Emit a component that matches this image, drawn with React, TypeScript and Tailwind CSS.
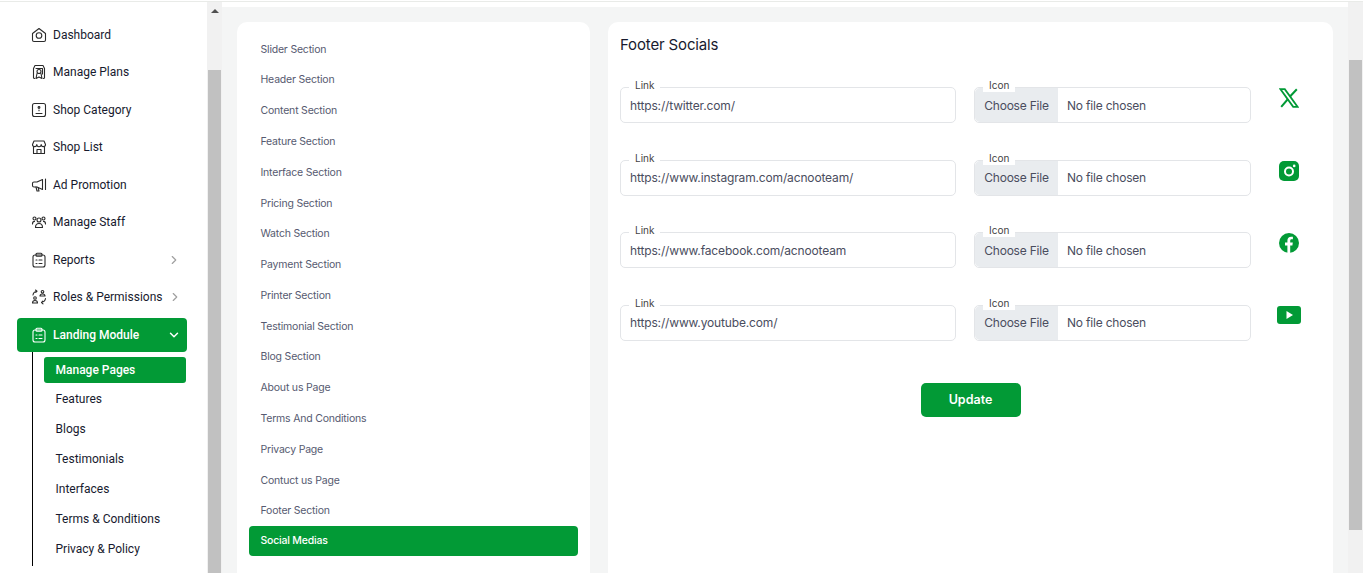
import React from "react";
import { ChevronRight, ChevronDown } from "lucide-react";

const G = "#029a36";

const I = ({ children }: { children: React.ReactNode }) => (
  <svg width="16" height="16" viewBox="0 0 16 16" fill="none" stroke="#2b2b2b" strokeWidth="1.100" strokeLinecap="round" strokeLinejoin="round" className="shrink-0">
    {children}
  </svg>
);

const icons: Record<string, React.ReactNode> = {
  home: (<I><path d="M1.500 13V6.500L8 1.500l6.500 5V13a1.500 1.500 0 0 1-1.500 1.500H3A1.500 1.500 0 0 1 1.500 13Z" /><circle cx="8" cy="8.500" r="2.800" /></I>),
  plans: (<I><path d="M3.500 14.500 2.500 14V4.500L4 1.500h8l1.500 3V14l-1 .5" /><path d="M5 4.500h6.500v5.500" /><circle cx="8" cy="7.500" r="2" /><path d="m6 9.500-1 5 3-1.500 3 1.500-1-5" /></I>),
  category: (<I><rect x="1.500" y="1.500" width="13" height="13" rx="2" /><circle cx="8" cy="5.500" r=".9" /><path d="M8 8v.8M5 11.500h6" /></I>),
  shop: (<I><path d="M1.500 5.500 3 2h10l1.500 3.500a2 2 0 0 1-4.300 0 2.200 2.200 0 0 1-4.400 0 2 2 0 0 1-4.300 0Z" /><path d="M2.500 8v6.500h11V8" /><path d="M6 14.500V10.500h4v4" /></I>),
  ad: (<I><path d="M11.500 2.500v10L6 10H3a1.500 1.500 0 0 1-1.500-1.500v-2A1.500 1.500 0 0 1 3 5h3Z" /><path d="M14.500 2v10.500" /><path d="m5 10 1 4h2l-.7-3.200" /></I>),
  staff: (<I><circle cx="8" cy="6" r="2" /><circle cx="3.500" cy="4.500" r="1.500" /><circle cx="12.500" cy="4.500" r="1.500" /><path d="M4.500 13.500c0-2.400 1.400-4 3.500-4s3.500 1.600 3.500 4ZM1.500 10c0-1.500.8-2.600 2-2.600M14.500 10c0-1.500-.8-2.600-2-2.600" /></I>),
  report: (<I><rect x="2" y="3" width="12" height="12" rx="2" /><rect x="5" y="1.200" width="6" height="3" rx="1" /><path d="M5 8h1M8 8h3M5 11.500h1M8 11.500h3" /></I>),
  roles: (<I><circle cx="11.500" cy="2.800" r="1.300" /><path d="M9 7c0-1.200 1-2 2.500-2S14 5.800 14 7Z" /><path d="M2 6c.3-2 1.500-3.500 4-3.800M4.500 1 6 2.200 4.800 3.500" /><circle cx="4" cy="9" r="1.300" /><path d="M1.500 14c0-1.500 1-2.500 2.500-2.500S6.500 12.500 6.500 14Z" /><path d="M14.500 9.500c-.3 2-1.500 3.500-4 3.800M12 14.800l-1.500-1.300 1.200-1.300" /></I>),
};

const ReportWhite = () => (
  <svg width="16" height="16" viewBox="0 0 16 16" fill="none" stroke="#fff" strokeWidth="1.100" strokeLinecap="round" strokeLinejoin="round" className="shrink-0">
    <rect x="2" y="3" width="12" height="12" rx="2" />
    <rect x="5" y="1.200" width="6" height="3" rx="1" />
    <path d="M5 8h1M8 8h3M5 11.500h1M8 11.500h3" />
  </svg>
);

const menu: [string, string, boolean?][] = [
  ["Dashboard", "home"],
  ["Manage Plans", "plans"],
  ["Shop Category", "category"],
  ["Shop List", "shop"],
  ["Ad Promotion", "ad"],
  ["Manage Staff", "staff"],
  ["Reports", "report", true],
  ["Roles & Permissions", "roles", true],
];

const subs = ["Features", "Blogs", "Testimonials", "Interfaces", "Terms & Conditions", "Privacy & Policy"];

const sections = [
  "Slider Section", "Header Section", "Content Section", "Feature Section", "Interface Section", "Pricing Section",
  "Watch Section", "Payment Section", "Printer Section", "Testimonial Section", "Blog Section", "About us Page",
  "Terms And Conditions", "Privacy Page", "Contuct us Page", "Footer Section",
];

const XIcon = () => (
  <svg width="20" height="20" viewBox="0 0 20 20" fill="none" stroke={G} strokeWidth="1.800">
    <path d="M1.500 1.200h4.300l12.700 17.600h-4.300Z" />
    <path d="M17.800 1.200 10.800 8.800M9 11 2.200 18.800" strokeWidth="2" />
  </svg>
);
const InstaIcon = () => (
  <svg width="20" height="20" viewBox="0 0 20 20">
    <rect width="20" height="20" rx="5" fill={G} />
    <circle cx="10" cy="10.500" r="4" fill="none" stroke="#fff" strokeWidth="2" />
    <circle cx="15.200" cy="4.900" r="1.300" fill="#fff" />
  </svg>
);
const FbIcon = () => (
  <svg width="20" height="20" viewBox="0 0 20 20">
    <circle cx="10" cy="10" r="10" fill={G} />
    <path d="M8.400 20v-7.500H6V9.600h2.400V7.500c0-2.500 1.500-3.800 3.700-3.800.9 0 1.800.1 1.800.1v2.400h-1.200c-1.200 0-1.500.7-1.500 1.500v1.900h2.600l-.4 2.900h-2.200V20Z" fill="#fff" />
  </svg>
);
const YtIcon = () => (
  <svg width="24" height="18" viewBox="0 0 24 18" className="-mt-[2px]">
    <rect width="24" height="18" rx="3" fill={G} />
    <path d="M9.500 5v8l6.500-4Z" fill="#fff" />
  </svg>
);

const socials: [string, React.ReactNode][] = [
  ["https://twitter.com/", <XIcon />],
  ["https://www.instagram.com/acnooteam/", <InstaIcon />],
  ["https://www.facebook.com/acnooteam", <FbIcon />],
  ["https://www.youtube.com/", <YtIcon />],
];

const Scrollbar = ({ top, bottom, arrow }: { top: number; bottom: number; arrow?: boolean }) => (
  <div className="w-[15px] shrink-0 bg-[#f1f1f1] flex flex-col items-center">
    <div className="w-full flex justify-center" style={{ height: top }}>
      {arrow && <div className="mt-[7px] w-0 h-0 border-l-[4px] border-r-[4px] border-b-[4px] border-l-transparent border-r-transparent border-b-[#505050]" />}
    </div>
    <div className="w-[13px] bg-[#c1c1c1]" style={{ height: 573 - top - bottom }} />
  </div>
);

export default function App() {
  return (
    <div className="w-[1363px] h-[573px] overflow-hidden bg-white flex flex-col font-['Inter',sans-serif]">
      <div className="h-[2px] shrink-0 flex flex-col"><div className="h-px" /><div className="h-px bg-[#e9ebe8]" /></div>
      <div className="flex flex-1 min-h-0">
        <aside className="w-[207px] shrink-0 font-['Roboto',sans-serif] pt-[14px] pl-[17px] overflow-hidden">
          {menu.map(([label, icon, arrow]) => (
            <div key={label} className="h-[37.500px] flex items-center pl-[14px] pr-[6px] w-[170px] text-[12px] text-[#171a2e] gap-[6px]">
              {icons[icon]}
              <span className="flex-1 whitespace-nowrap">{label}</span>
              {arrow && <ChevronRight size={14} strokeWidth={2} className="text-[#a0a0a0] shrink-0" />}
            </div>
          ))}
          <div className="mt-[2px] h-[34px] w-[170px] rounded-[4px] bg-[#029a36] flex items-center pl-[14px] pr-[6px] gap-[6px] text-white text-[12px] font-medium">
            <ReportWhite />
            <span className="flex-1">Landing Module</span>
            <ChevronDown size={14} strokeWidth={2.500} />
          </div>
          <div className="ml-[15px] w-[155px] border-l border-black pt-[5px] pb-[2px]">
            <div className="ml-[11px] h-[26px] w-[142px] rounded-[3px] bg-[#029a36] text-white text-[12px] font-medium flex items-center pl-[11.500px] pb-[1px] mb-[1px]">Manage Pages</div>
            {subs.map((s) => (
              <div key={s} className="ml-[11px] h-[30px] flex items-center pl-[11.500px] text-[12px] text-[#171a2e]">{s}</div>
            ))}
          </div>
        </aside>
        <Scrollbar top={68} bottom={0} arrow />
        <div className="flex-1 min-w-0 pt-[5px]">
          <main className="h-full bg-[#f4f5f5] flex gap-[18px] pl-[15px] pr-[15px] pt-[15px]">
            <section className="w-[353px] shrink-0 h-[600px] bg-white rounded-[10px] pl-[12px] pr-[12px] pt-[12px]">
              {sections.map((s) => (
                <div key={s} className="h-[30.800px] flex items-center pl-[11.500px] text-[10.500px] tracking-[-0.2px] text-[#565a70]">{s}</div>
              ))}
              <div className="h-[30px] -mt-[1px] bg-[#029a36] rounded-[4px] flex items-center pl-[11.500px] pt-[1px] text-[10.500px] tracking-[-0.2px] font-medium text-white">Social Medias</div>
            </section>
            <section className="w-[725px] shrink-0 h-[600px] bg-white rounded-[10px] pl-[12px] pt-[13px]">
              <h2 className="text-[15px] tracking-[-0.15px] leading-[20px] text-[#171a2e] mb-[32px]">Footer Socials</h2>
              <div className="flex flex-col gap-[36.670px]">
                {socials.map(([url, icon]) => (
                  <div key={url} className="flex items-center h-[36px]">
                    <div className="relative shrink-0 w-[336px] h-[36px] border border-[#e3e5e8] rounded-[5px] flex items-center pl-[9px] pt-[1px] text-[12px] tracking-[-0.15px] text-[#4a4d5e]">
                      <span className="absolute left-[8px] -top-[9px] bg-white px-[6px] text-[10px] tracking-normal leading-[13px] text-[#444]">Link</span>
                      {url}
                    </div>
                    <div className="relative shrink-0 ml-[18px] w-[277px] h-[36px] border border-[#e3e5e8] rounded-[5px] flex items-center text-[12px] tracking-[-0.2px] text-[#4a4d5e]">
                      <span className="absolute left-[8px] -top-[9px] bg-white px-[6px] text-[10px] tracking-normal leading-[13px] text-[#444]">Icon</span>
                      <span className="w-[83px] h-full bg-[#e9ecef] rounded-l-[5px] flex items-center justify-center shrink-0 pt-[1px]">Choose File</span>
                      <span className="pl-[9px] pt-[1px]">No file chosen</span>
                    </div>
                    <div className="w-[76px] shrink-0 flex justify-center -mt-[14px]">{icon}</div>
                  </div>
                ))}
              </div>
              <div className="flex justify-center mt-[42px] w-[701px]">
                <button className="w-[100px] h-[34px] rounded-[5px] bg-[#029a36] text-white text-[12.500px] font-semibold">Update</button>
              </div>
            </section>
          </main>
        </div>
        <Scrollbar top={58} bottom={45} />
      </div>
    </div>
  );
}
